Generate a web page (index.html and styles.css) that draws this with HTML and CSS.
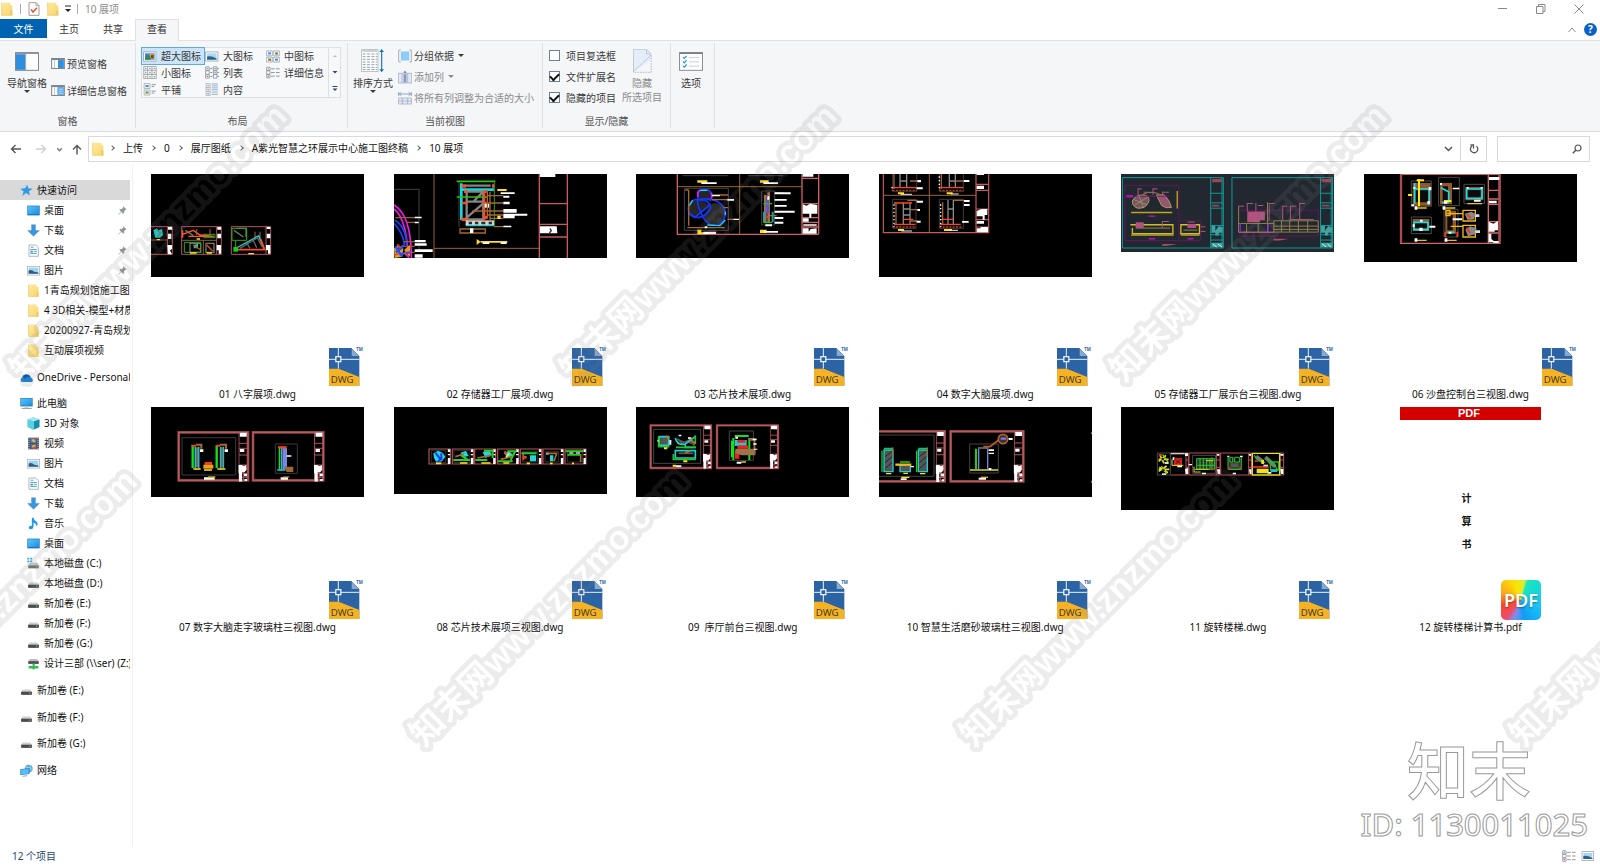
FILE: index.html
```html
<!DOCTYPE html>
<html lang="zh-CN">
<head>
<meta charset="utf-8">
<title>10 展项</title>
<link rel="stylesheet" href="styles.css">
</head>
<body>
<svg class="sprite" aria-hidden="true">
  <defs>
    <linearGradient id="g-folder" x1="0" y1="0" x2="1" y2="1"><stop offset="0" stop-color="#ffeaa0"/><stop offset="1" stop-color="#f7d56e"/></linearGradient>
    <linearGradient id="g-drive" x1="0" y1="0" x2="0" y2="1"><stop offset="0" stop-color="#e3e3e3"/><stop offset=".45" stop-color="#bcbcbc"/><stop offset=".5" stop-color="#4a4a4a"/><stop offset="1" stop-color="#3a3a3a"/></linearGradient>
    <linearGradient id="g-screen" x1="0" y1="0" x2="1" y2="1"><stop offset="0" stop-color="#58c4fb"/><stop offset="1" stop-color="#1f8fe0"/></linearGradient>
  </defs>
  <symbol id="folder" viewBox="0 0 36 42"><path d="M2 2H28V10H34V40H2Z" fill="url(#g-folder)"/><path d="M2 2V40H34" fill="none" stroke="#e9c55c" stroke-width="2"/><path d="M28 28V40H34V24Z" fill="#efc75a"/></symbol>
  <symbol id="doccheck" viewBox="0 0 36 42"><path d="M3 2H24L33 11V40H3Z" fill="#fff" stroke="#8a8a8a" stroke-width="2.5"/><path d="M24 2V11H33" fill="none" stroke="#8a8a8a" stroke-width="2"/><path d="M9 22L15 30L27 17" fill="none" stroke="#e8532a" stroke-width="4.5"/></symbol>
  <symbol id="star" viewBox="0 0 36 36"><path d="M20 2L23 12L35 13L25 20L27 32L17 25L6 33L10 21L1 13L14 12Z" fill="#2e9be8"/></symbol>
  <symbol id="desktop" viewBox="0 0 40 40"><rect x="1" y="5" width="38" height="30" fill="#1573c4"/><rect x="3" y="7" width="34" height="24" fill="url(#g-screen)"/></symbol>
  <symbol id="down" viewBox="0 0 40 40"><path d="M14 2H26V20H38L20 38L2 20H14Z" fill="#3c95e0" stroke="#2377bf" stroke-width="1"/></symbol>
  <symbol id="doc" viewBox="0 0 40 40"><path d="M6 3H27L35 11V38H6Z" fill="#f7f9fb" stroke="#8d989f" stroke-width="2"/><path d="M12 10H20M10 17H30M10 29H30M22 23H30" stroke="#56a5d6" stroke-width="3"/><path d="M11 21H18V26H11Z" fill="#3d8dc8"/></symbol>
  <symbol id="pic" viewBox="0 0 40 40"><rect x="1" y="7" width="38" height="27" fill="#fff" stroke="#9ba3a8" stroke-width="2"/><rect x="5" y="11" width="30" height="19" fill="#9fd3f3"/><path d="M5 20Q14 16 22 24L35 26V30H5Z" fill="#2c5e7e"/></symbol>
  <symbol id="pin" viewBox="0 0 28 28"><path d="M16 1L27 11L23 12L19 17L19 22L16 24L10 18L2 27L1 26L9 17L4 11L7 9H12L16 5Z" fill="#8e989f"/></symbol>
  <symbol id="cloud" viewBox="0 0 40 40"><path d="M4 33Q-1 25 7 20Q11 8 22 11Q32 12 33 20Q41 22 39 32Q38 34 33 34H8Z" fill="#1b80d2"/><path d="M7 20Q11 8 22 11Q29 12 32 20Q20 14 16 24Q11 19 7 20Z" fill="#0e5ba5"/></symbol>
  <symbol id="pc" viewBox="0 0 40 40"><rect x="1" y="3" width="38" height="26" fill="#2e7db5"/><rect x="3" y="5" width="34" height="21" fill="url(#g-screen)"/><path d="M14 29H26V33H14Z" fill="#bccbd3"/><path d="M5 35H36" stroke="#7d9aab" stroke-width="3"/></symbol>
  <symbol id="cube" viewBox="0 0 40 40"><path d="M20 1L38 8V31L20 39L2 31V8Z" fill="#36b8d0"/><path d="M20 1L38 8L22 14L2 8Z" fill="#a4e9f1"/><path d="M2 8L22 14V39L2 31Z" fill="#5ccfe0"/><path d="M22 14L38 8V31L22 38Z" fill="#178ca9"/></symbol>
  <symbol id="film" viewBox="0 0 40 40"><path d="M3 2H37V38H3Z" fill="#4d5358"/><path d="M6 4V37M34 4V37" stroke="#d9dde0" stroke-width="3" stroke-dasharray="3 3"/><path d="M11 3H29V18H11Z" fill="#3d7fd0"/><path d="M11 21H29V37H11Z" fill="#3b68b8"/><path d="M13 9L20 6L27 14L20 17ZM14 27L26 23V32H16Z" fill="#f1b437"/><path d="M21 5L29 10V4ZM18 30H28V36H18Z" fill="#d6552f"/></symbol>
  <symbol id="music" viewBox="0 0 40 40"><path d="M15 2H20Q21 11 32 17Q34 25 29 30Q30 20 20 17V30Q19 38 11 38Q4 37 6 31Q8 26 15 27Z" fill="#1d98ec"/></symbol>
  <symbol id="drive" viewBox="0 0 40 40"><path d="M9 16H31L36 23V32H4V23Z" fill="url(#g-drive)"/><path d="M4 24H36V33H4Z" fill="#4a4b4c"/><path d="M28 28H32" stroke="#6be06c" stroke-width="3"/></symbol>
  <symbol id="drivec" viewBox="0 0 40 40"><path d="M1 2H7V8H1ZM10 2H16V8H10ZM1 11H7V16H1ZM10 11H16V16H10Z" fill="#35a7ea"/><path d="M9 18H31L36 25V34H4V25Z" fill="#c8c8c8"/><path d="M4 26H36V35H4Z" fill="#707478"/><path d="M28 30H32" stroke="#6be06c" stroke-width="3"/></symbol>
  <symbol id="drivenet" viewBox="0 0 40 40"><path d="M9 6H31L36 12V21H4V12Z" fill="#bdbdbd"/><path d="M4 13H36V21H4Z" fill="#4a4b4c"/><path d="M17 21H24V28H35V35H24V38H16V35H5V28H17Z" fill="#37bd51"/></symbol>
  <symbol id="net" viewBox="0 0 40 40"><circle cx="27" cy="14" r="12" fill="#59a6d8"/><path d="M20 5Q28 13 20 24M32 3Q26 14 36 22M16 12Q27 8 38 14" fill="none" stroke="#b9e1f6" stroke-width="2"/><path d="M1 16L29 12V31L1 34Z" fill="#1c78be"/><path d="M3 18L27 14V29L3 32Z" fill="#55c0f5"/><path d="M8 38L22 36" stroke="#8aa5b5" stroke-width="3"/></symbol>

  <symbol id="navpane" viewBox="0 0 72 56"><rect x="1.5" y="1.5" width="69" height="53" fill="#fdfdfd" stroke="#7f868c" stroke-width="3"/><path d="M3 3H69" stroke="#7f868c" stroke-width="4"/><rect x="3" y="6" width="28" height="47" fill="#2f8fdf"/><path d="M32 5V53" stroke="#7f868c" stroke-width="2"/></symbol>
  <symbol id="preview" viewBox="0 0 40 32"><rect x="1.500" y="1.500" width="37" height="29" fill="#fff" stroke="#7f868c" stroke-width="3"/><path d="M2 4H38" stroke="#7f868c" stroke-width="4"/><path d="M10 5V30" stroke="#a9b0b6" stroke-width="2"/><rect x="20" y="6" width="17" height="23" fill="#2f8fdf"/></symbol>
  <symbol id="details" viewBox="0 0 40 32"><rect x="1.500" y="1.500" width="37" height="29" fill="#fff" stroke="#7f868c" stroke-width="3"/><path d="M2 4H38" stroke="#7f868c" stroke-width="4"/><path d="M10 5V30" stroke="#a9b0b6" stroke-width="2"/><rect x="18" y="6" width="19" height="23" fill="#5aa9e8"/><path d="M22 12H34M22 18H34M22 24H34" stroke="#e8f4fd" stroke-width="2"/></symbol>
  <symbol id="xl" viewBox="0 0 40 36"><rect x="2" y="5" width="35" height="26" fill="#fff" stroke="#8d959b" stroke-width="2"/><rect x="6" y="9" width="27" height="18" fill="#3f7fd3"/><path d="M6 19L15 15L22 22V27H6Z" fill="#2c8d55"/><path d="M18 11H31V24H22Z" fill="#d9a42e"/><path d="M23 14H30V22H23Z" fill="#703920"/></symbol>
  <symbol id="lg" viewBox="0 0 40 36"><rect x="2" y="5" width="35" height="26" fill="#fff" stroke="#8d959b" stroke-width="2"/><rect x="6" y="9" width="27" height="18" fill="#a6d8f5"/><path d="M6 18Q18 15 33 24V27H6Z" fill="#2c6486"/></symbol>
  <symbol id="md" viewBox="0 0 40 36"><path d="M2 2H18V16H2ZM22 2H38V16H22ZM2 20H18V34H2ZM22 20H38V34H22Z" fill="#fff" stroke="#8d959b" stroke-width="2"/><path d="M6 6H14V12H6ZM26 24H34V30H26Z" fill="#4998d8"/><path d="M26 6H34V12H26ZM6 24H14V30H6Z" fill="#58a067"/><path d="M10 25H15V31H10ZM29 9H33V13H29Z" fill="#dd5d32"/></symbol>
  <symbol id="sm" viewBox="0 0 40 40"><path d="M1 1H39V39H1ZM13 1V39M26 1V39M1 13H39M1 26H39" fill="#fff" stroke="#8d959b" stroke-width="2.500"/><path d="M5 5H9V9H5ZM18 18H22V22H18ZM31 5H35V9H31Z" fill="#4998d8"/><path d="M18 5H22V9H18ZM5 31H9V35H5ZM31 18H35V22H31Z" fill="#db7559"/><path d="M5 18H9V22H5ZM31 31H35V35H31ZM18 31H22V35H18Z" fill="#6cab78"/></symbol>
  <symbol id="list" viewBox="0 0 40 36"><path d="M2 2H12V12H2ZM2 13H12V23H2ZM2 24H12V34H2ZM24 2H34V12H24ZM24 13H34V23H24ZM24 24H34V34H24Z" fill="#fff" stroke="#8d959b" stroke-width="2.500"/><path d="M15 7H21M15 18H21M15 29H21M35 7H40M35 18H40M35 29H40" stroke="#7d858b" stroke-width="2.500"/><path d="M5 5H9V9H5ZM27 16H31V20H27Z" fill="#6aa8dc"/><path d="M5 27H9V31H5ZM27 5H31V9H27Z" fill="#db7559"/></symbol>
  <symbol id="detail" viewBox="0 0 42 36"><path d="M2 2H12V12H2ZM2 13H12V23H2ZM2 24H12V34H2Z" fill="#fff" stroke="#8d959b" stroke-width="2.500"/><path d="M15 7H42M15 18H42M15 29H42" stroke="#7d858b" stroke-width="2.500" stroke-dasharray="11 4"/><path d="M5 5H9V9H5Z" fill="#6aa8dc"/><path d="M5 27H9V31H5Z" fill="#db5a59"/></symbol>
  <symbol id="tile" viewBox="0 0 40 40"><path d="M2 2H20V17H2ZM2 22H20V37H2Z" fill="#fff" stroke="#8d959b" stroke-width="2"/><path d="M6 6H16V13H6Z" fill="#4998d8"/><path d="M6 26H16V33H6Z" fill="#58a067"/><path d="M11 26H16V30H11Z" fill="#e0aa30"/><path d="M25 5H38M25 11H33M25 25H38M25 31H33" stroke="#7d858b" stroke-width="2.500"/></symbol>
  <symbol id="content" viewBox="0 0 40 40"><path d="M2 1H14V39H2ZM2 14H14M2 26H14" fill="#fff" stroke="#8d959b" stroke-width="2"/><path d="M6 5H10V10H6ZM6 30H10V35H6Z" fill="#4998d8"/><path d="M6 18H10V22H6Z" fill="#d8683f"/><path d="M19 3H38M19 9H38M19 15H38M19 21H38M19 28H38M19 35H38" stroke="#7c9cc9" stroke-width="2.500"/></symbol>
  <symbol id="sort" viewBox="0 0 72 72"><rect x="2" y="2" width="49" height="66" fill="#fff" stroke="#a5abb0" stroke-width="2"/><path d="M4 6H49" stroke="#c4c9cc" stroke-width="5"/><path d="M5 15H49M5 23H49M5 31H49M5 39H49M5 47H49M5 55H49M5 62H49" stroke="#8ea2b2" stroke-width="3" stroke-dasharray="9 4"/><path d="M62 6V64" stroke="#1673c4" stroke-width="3.500"/><path d="M62 0L69 9H55ZM62 70L69 61H55Z" fill="#1673c4"/></symbol>
  <symbol id="group" viewBox="0 0 40 40"><path d="M8 3H2V37H8M32 3H38V37H32" fill="none" stroke="#8a939b" stroke-width="2"/><rect x="8" y="7" width="24" height="26" fill="#8dcdf7"/></symbol>
  <symbol id="addcol" viewBox="0 0 42 40"><path d="M1 9H41V38H1ZM12 9V38M29 9V38" fill="#e3eaf5" stroke="#94a3bb" stroke-width="2"/><path d="M14 8H27V38H14Z" fill="#b9c8e1"/><path d="M21 1L26 7H16Z" fill="#5e7398"/><path d="M21 12V36" stroke="#5e7398" stroke-width="3"/></symbol>
  <symbol id="fit" viewBox="0 0 42 40"><path d="M1 20H41V38H1ZM1 29H41M13 20V38M29 20V38" fill="#e3eaf5" stroke="#94a3bb" stroke-width="2"/><path d="M2 2V14M40 2V14M4 8H38M10 3L4 8L10 13M32 3L38 8L32 13" fill="none" stroke="#8293b5" stroke-width="2.500"/></symbol>
  <symbol id="hide" viewBox="0 0 56 72"><path d="M1 1H40L54 15V33L1 68Z" fill="#e5edf8"/><path d="M1 70V1H40L54 15M40 1V15H54M1 68L54 18" fill="none" stroke="#a9b8cf" stroke-width="2"/><path d="M54 18V70H1" fill="none" stroke="#8da0c0" stroke-width="2" stroke-dasharray="5 3"/></symbol>
  <symbol id="options" viewBox="0 0 72 56"><rect x="1.500" y="1.500" width="69" height="53" fill="#fcfcfc" stroke="#8a9097" stroke-width="3"/><path d="M2 3H70" stroke="#767d84" stroke-width="5"/><path d="M12 15L16 19L23 11M12 28L16 32L23 24M12 41L16 45L23 37" fill="none" stroke="#2e8fe0" stroke-width="3.500"/><path d="M30 16H60M30 29H60M30 42H60" stroke="#c4c8cc" stroke-width="2.500"/></symbol>

  <symbol id="dwg" viewBox="0 0 120 120">
    <path d="M15 3H82L106 27V117H15Z" fill="#2b63a4"/><path d="M83 2L107 26V2Z" fill="#fff"/><path d="M83 5V27H105Z" fill="#86a9d0"/>
    <path d="M15 65H44L106 90V117H15Z" fill="#f5b324"/><path d="M43 3V65M15 37H106" stroke="#e9f1f8" stroke-width="3"/><rect x="35.500" y="29" width="15" height="15" fill="#2b63a4" stroke="#fff" stroke-width="3.500"/>
    <text x="20" y="109" class="dwg-name">DWG</text><text x="97" y="13" class="dwg-tm">TM</text>
  </symbol>
  <symbol id="titleblock" viewBox="0 0 30 150" preserveAspectRatio="none"><path d="M2 0V150M2 35H28M2 50H28M2 70H28M2 100H28M16 100V150M2 112H28M2 125H28M2 137H28" stroke="#b75358" stroke-width="3" fill="none"/><path d="M5 3H27V15H5ZM5 52H19V61H5ZM0 100H12L16 104L26 100V115L20 122H12V150H2V125H0ZM18 126H28V134H18ZM20 142H28V148H20Z" fill="#fff"/></symbol>
</svg>

<div class="window">
  <header class="titlebar">
    <svg class="i-folder"><use href="#folder"/></svg><span class="tick"></span>
    <button class="bare" aria-label="属性"><svg class="i-folder"><use href="#doccheck"/></svg></button>
    <button class="bare" aria-label="新建文件夹"><svg class="i-folder"><use href="#folder"/></svg></button>
    <button class="bare customize" aria-label="自定义快速访问工具栏"><svg class="i-cust" viewBox="0 0 8 8"><path d="M1 1H7" stroke="#222"/><path d="M1 4H7L4 7Z" fill="#222"/></svg></button>
    <span class="tick"></span>
    <h1 class="caption">10 展项</h1>
    <div class="winbtns">
      <button class="bare" aria-label="最小化"><svg viewBox="0 0 10 10"><path d="M0 4.500H9" stroke="#888"/></svg></button>
      <button class="bare" aria-label="还原"><svg viewBox="0 0 10 10"><path d="M.5 2.500H7V9.500H.5ZM2.500 2.500V.5H9V7.500H7" fill="none" stroke="#888"/></svg></button>
      <button class="bare" aria-label="关闭"><svg viewBox="0 0 10 10"><path d="M.5 .5L9.500 9.500M9.500 .5L.5 9.500" stroke="#888"/></svg></button>
    </div>
  </header>

  <nav class="tabs">
    <button class="tab tab-file">文件</button><button class="tab">主页</button><button class="tab">共享</button><button class="tab tab-on">查看</button>
    <div class="tabs-end">
      <button class="bare" aria-label="最小化功能区"><svg class="i-up" viewBox="0 0 8 6"><path d="M.5 5L4 1L7.500 5" fill="none" stroke="#8a8a8a"/></svg></button>
      <button class="help" aria-label="帮助">?</button>
    </div>
  </nav>

  <section class="ribbon">
    <div class="group g-pane">
      <div class="group-body">
        <button class="big"><span class="big-icon"><svg class="i-wide"><use href="#navpane"/></svg></span>导航窗格<i class="caret"></i></button>
        <div class="stack stack-two">
          <button class="small"><svg class="i-pane"><use href="#preview"/></svg>预览窗格</button>
          <button class="small"><svg class="i-pane"><use href="#details"/></svg>详细信息窗格</button>
        </div>
      </div>
      <div class="group-name">窗格</div>
    </div>
    <div class="group g-layout">
      <div class="group-body">
        <div class="gallery">
          <div class="views">
            <button class="view view-on"><svg><use href="#xl"/></svg>超大图标</button>
            <button class="view"><svg><use href="#lg"/></svg>大图标</button>
            <button class="view"><svg><use href="#md"/></svg>中图标</button>
            <button class="view"><svg><use href="#sm"/></svg>小图标</button>
            <button class="view"><svg><use href="#list"/></svg>列表</button>
            <button class="view"><svg><use href="#detail"/></svg>详细信息</button>
            <button class="view"><svg><use href="#tile"/></svg>平铺</button>
            <button class="view"><svg><use href="#content"/></svg>内容</button>
          </div>
          <div class="scroller">
            <button class="bare" aria-label="上一行"><svg viewBox="0 0 6 6"><path d="M1 4H5L3 2Z" fill="#b5b9bd"/></svg></button>
            <button class="bare" aria-label="下一行"><svg viewBox="0 0 6 6"><path d="M.5 2H5.500L3 4.500Z" fill="#344766"/></svg></button>
            <button class="bare" aria-label="其他"><svg viewBox="0 0 6 6"><path d="M.5 .5H5.500" stroke="#344766"/><path d="M.5 2.500H5.500L3 5Z" fill="#344766"/></svg></button>
          </div>
        </div>
      </div>
      <div class="group-name">布局</div>
    </div>
    <div class="group g-current">
      <div class="group-body">
        <button class="big"><span class="big-icon"><svg class="i-square"><use href="#sort"/></svg></span>排序方式<i class="caret"></i></button>
        <div class="stack">
          <button class="small"><svg class="i-cmd"><use href="#group"/></svg>分组依据<i class="caret"></i></button>
          <button class="small" disabled><svg class="i-cmd"><use href="#addcol"/></svg>添加列<i class="caret"></i></button>
          <button class="small" disabled><svg class="i-cmd"><use href="#fit"/></svg>将所有列调整为合适的大小</button>
        </div>
      </div>
      <div class="group-name">当前视图</div>
    </div>
    <div class="group g-show">
      <div class="group-body">
        <div class="stack">
          <label class="check"><input type="checkbox">项目复选框</label>
          <label class="check"><input type="checkbox" checked>文件扩展名</label>
          <label class="check"><input type="checkbox" checked>隐藏的项目</label>
        </div>
        <button class="big" disabled><span class="big-icon"><svg class="i-page"><use href="#hide"/></svg></span>隐藏<span>所选项目</span></button>
      </div>
      <div class="group-name">显示/隐藏</div>
    </div>
    <div class="group g-options">
      <div class="group-body">
        <button class="big"><span class="big-icon"><svg class="i-wide"><use href="#options"/></svg></span>选项</button>
      </div>
    </div>
  </section>

  <div class="address">
    <button class="bare nav-b" aria-label="后退"><svg viewBox="0 0 12 10"><path d="M11 5H1.500M5.500 1L1.500 5L5.500 9" fill="none" stroke="#555" stroke-width="1.400"/></svg></button>
    <button class="bare nav-b" aria-label="前进" disabled><svg viewBox="0 0 12 10"><path d="M1 5H10.500M6.500 1L10.500 5L6.500 9" fill="none" stroke="#cfcfcf" stroke-width="1.400"/></svg></button>
    <button class="bare nav-s" aria-label="最近的位置"><svg viewBox="0 0 6 6"><path d="M1 2L3 4L5 2" fill="none" stroke="#777" stroke-width="1.200"/></svg></button>
    <button class="bare nav-u" aria-label="上移"><svg viewBox="0 0 10 11"><path d="M5 10.500V1.500M1 5.500L5 1.500L9 5.500" fill="none" stroke="#555" stroke-width="1.400"/></svg></button>
    <div class="pathbox">
      <svg class="i-folder"><use href="#folder"/></svg>
      <nav class="crumbs">
        <i class="chev"></i><a href="#">上传</a><i class="chev"></i><a href="#">0</a><i class="chev"></i><a href="#">展厅图纸</a><i class="chev"></i><a href="#">A紫光智慧之环展示中心施工图终稿</a><i class="chev"></i><a href="#">10 展项</a>
      </nav>
      <button class="bare path-drop" aria-label="以前的位置"><svg viewBox="0 0 9 6"><path d="M1 1L4.500 4.500L8 1" fill="none" stroke="#555" stroke-width="1.500"/></svg></button>
      <button class="bare path-refresh" aria-label="刷新"><svg viewBox="0 0 10 10"><path d="M7.500 2.200A3.700 3.700 0 1 1 3 2" fill="none" stroke="#555" stroke-width="1.300"/><path d="M1.500 1H4.500V4.500" fill="none" stroke="#555" stroke-width="1.300"/></svg></button>
    </div>
    <div class="searchbox">
      <input type="search" aria-label="搜索">
      <svg viewBox="0 0 10 10"><circle cx="6" cy="4" r="3" fill="none" stroke="#555" stroke-width="1.200"/><path d="M4 6L.8 9.200" stroke="#555" stroke-width="1.500"/></svg>
    </div>
  </div>

  <div class="main">
    <nav class="tree">
      <a href="#" class="root here"><svg><use href="#star"/></svg><span>快速访问</span></a>
      <a href="#"><svg><use href="#desktop"/></svg><span>桌面</span><svg class="i-pin"><use href="#pin"/></svg></a>
      <a href="#"><svg><use href="#down"/></svg><span>下载</span><svg class="i-pin"><use href="#pin"/></svg></a>
      <a href="#"><svg><use href="#doc"/></svg><span>文档</span><svg class="i-pin"><use href="#pin"/></svg></a>
      <a href="#"><svg><use href="#pic"/></svg><span>图片</span><svg class="i-pin"><use href="#pin"/></svg></a>
      <a href="#"><svg><use href="#folder"/></svg><span>1青岛规划馆施工图</span></a>
      <a href="#"><svg><use href="#folder"/></svg><span>4 3D相关-模型+材质</span></a>
      <a href="#"><svg><use href="#folder"/></svg><span>20200927-青岛规划</span></a>
      <a href="#"><svg><use href="#folder"/></svg><span>互动展项视频</span></a>
      <a href="#" class="root"><svg><use href="#cloud"/></svg><span>OneDrive - Personal</span></a>
      <a href="#" class="root tight"><svg><use href="#pc"/></svg><span>此电脑</span></a>
      <a href="#"><svg><use href="#cube"/></svg><span>3D 对象</span></a>
      <a href="#"><svg><use href="#film"/></svg><span>视频</span></a>
      <a href="#"><svg><use href="#pic"/></svg><span>图片</span></a>
      <a href="#"><svg><use href="#doc"/></svg><span>文档</span></a>
      <a href="#"><svg><use href="#down"/></svg><span>下载</span></a>
      <a href="#"><svg><use href="#music"/></svg><span>音乐</span></a>
      <a href="#"><svg><use href="#desktop"/></svg><span>桌面</span></a>
      <a href="#"><svg><use href="#drivec"/></svg><span>本地磁盘 (C:)</span></a>
      <a href="#"><svg><use href="#drive"/></svg><span>本地磁盘 (D:)</span></a>
      <a href="#"><svg><use href="#drive"/></svg><span>新加卷 (E:)</span></a>
      <a href="#"><svg><use href="#drive"/></svg><span>新加卷 (F:)</span></a>
      <a href="#"><svg><use href="#drive"/></svg><span>新加卷 (G:)</span></a>
      <a href="#"><svg><use href="#drivenet"/></svg><span>设计三部 (\\ser) (Z:)</span></a>
      <a href="#" class="root"><svg><use href="#drive"/></svg><span>新加卷 (E:)</span></a>
      <a href="#" class="root"><svg><use href="#drive"/></svg><span>新加卷 (F:)</span></a>
      <a href="#" class="root tight"><svg><use href="#drive"/></svg><span>新加卷 (G:)</span></a>
      <a href="#" class="root"><svg><use href="#net"/></svg><span>网络</span></a>
    </nav>

    <main class="files">
      <figure class="file">
        <div class="thumb">
          <svg class="cad h103" viewBox="33 27 639 309">
            <g fill="none" stroke="#b75358" stroke-width="3"><path d="M33 185H97V268H33M82 185V268M125 185H244V268H125ZM230 185V268M274 185H392V268H274ZM378 185V268"/></g>
            <path d="M33 225H82M125 226H230M190 226V268" stroke="#8e5b33" stroke-width="3"/>
            <path d="M84 186H96V194H84ZM84 206H94V222H84ZM82 240H96V252L90 256L96 268H84ZM232 186H243V194H232ZM232 206H243V220H232ZM230 240H243V266H236V256H230ZM380 186H391V192H380ZM380 206H391V220H380ZM378 240H391V266H384V256H378Z" fill="#fff"/>
            <path d="M40 196L50 190L56 196L66 192L69 210L60 218H46ZM160 240L174 236V250H162Z" fill="#19c6c9"/>
            <path d="M48 192L62 205L52 215M136 196L160 212M150 235H182V262H150ZM198 235H222V262H198ZM282 196L310 216M290 190H318V216" stroke="#6f7d60" stroke-width="4" fill="none"/>
            <path d="M128 208L160 196L180 210L222 214M128 196V218M145 214H205" stroke="#ff5130" stroke-width="4" fill="none"/><path d="M188 208H225V218H190M133 232H182V262H133ZM276 190H320V226H276ZM287 226V250" stroke="#1fae1f" stroke-width="3" fill="none"/>
            <path d="M210 192V216M170 192V210M345 200V225M360 200V225" stroke="#a56937" stroke-width="3"/>
            <path d="M284 252L356 212L372 252" fill="none" stroke="#1fd4d4" stroke-width="4"/><path d="M284 254H374L362 222" fill="none" stroke="#ff4a2a" stroke-width="5"/><path d="M300 250L352 218L366 245M320 234L330 250M340 226L350 248" stroke="#666" stroke-width="4" fill="none"/>
            <path d="M280 246H294V260H280Z" fill="#17d117"/><path d="M160 240L182 255M200 240L218 258" stroke="#e4472a" stroke-width="4"/><path d="M150 264H170M200 264H216M325 266H342M170 222H180M50 224H60" stroke="#ffe11e" stroke-width="4"/>
          </svg>
          <svg class="badge"><use href="#dwg"/></svg>
        </div>
        <figcaption>01 八字展项.dwg</figcaption>
      </figure>

      <figure class="file">
        <div class="thumb">
          <svg class="cad h84" viewBox="760 27 639 252">
            <path d="M760 73H835V262M955 50V186" stroke="#444" stroke-width="3" fill="none"/><path d="M880 27V279M880 250H1195" stroke="#9a6130" stroke-width="3"/>
            <path d="M1196 27V279M1280 27V279M1196 116H1280M1196 178H1280M1196 216H1280" stroke="#c8595d" stroke-width="4"/>
            <path d="M760 120Q812 150 812 279M760 132Q798 160 803 279" fill="none" stroke="#f218ec" stroke-width="5"/><path d="M762 165Q796 185 798 240M760 175Q785 200 792 240" fill="none" stroke="#1a43f5" stroke-width="5"/>
            <path d="M764 158H822M798 172H822M790 230H822M780 244H822M800 262H822" stroke="#9a6130" stroke-width="4"/>
            <path d="M822 155H843V160H822ZM822 170H834V175H822ZM822 225H855V232H822ZM822 235H858V242H822ZM822 253H876V261H822ZM822 268H846V278H822Z" fill="#fff"/>
            <path d="M760 250L775 240L770 262L788 248L785 275L762 279ZM790 255L808 240V275Z" fill="#d8a21c"/><path d="M766 262L790 240M764 244L784 274M776 268L808 262" stroke="#274bff" stroke-width="7"/><path d="M770 238L780 250M792 262L800 274M762 270L774 266" stroke="#ff3b30" stroke-width="5"/>
            <path d="M962 55V165M960 74H1060M975 180H1060" stroke="#16d6dc" stroke-width="8"/>
            <path d="M974 62H1050M978 80V165M978 80H1030M1028 80V165M978 110H1030M978 158L1028 115M1000 108L1028 80M978 163H1028" stroke="#858585" stroke-width="7" fill="none"/>
            <path d="M948 49H1064M948 96H1042" stroke="#27c315" stroke-width="5"/><path d="M1061 46V185" stroke="#27a315" stroke-width="3"/>
            <path d="M964 58H976V68H964ZM1054 58H1060V68H1054ZM970 76H980V84H970ZM1028 76H1038V84H1028ZM964 110H980V118H964ZM1028 110H1038V118H1028ZM962 158H980V168H962ZM1028 80H1034V165H1028ZM1028 152H1040V162H1028Z" fill="#ff4a1c"/>
            <path d="M975 166H1060V180H975Z" fill="#d7d0c9"/><path d="M984 170H994V178H984ZM1003 170H1013V178H1003ZM1022 170H1034V178H1022ZM1044 170H1054V178H1044Z" fill="#2e2e2e"/><path d="M1032 116H1046V128H1032Z" fill="#fff"/>
            <path d="M1040 76V160M1048 80V165M1040 92H1088M1040 114H1088M995 138H1088M1040 150H1088M1048 160H1088M1060 185H1088M958 192H1034V204H958Z" stroke="#a96732" stroke-width="4" fill="none"/>
            <path d="M1080 82H1122V87H1080ZM1088 92H1106V98H1088ZM1088 110H1107V118H1088ZM1088 132H1128V143H1088ZM1088 146H1160V152H1088ZM1088 152H1122V160H1088ZM1088 182H1112V187H1088ZM988 190H998V204H988Z" fill="#fff"/>
            <path d="M1008 222L1020 230L1008 240ZM1020 228H1100V233H1020ZM1070 72H1098V78H1070ZM1070 152H1080V162H1070Z" fill="#ffe01c"/><path d="M1026 232H1046V237H1026ZM1080 232H1098V237H1080Z" fill="#fff"/>
            <path d="M1198 27H1244V36H1198ZM1198 184H1248L1250 205H1198Z" fill="#fff"/><path d="M1228 190L1232 197L1226 204" stroke="#333" stroke-width="4" fill="none"/>
          </svg>
          <svg class="badge"><use href="#dwg"/></svg>
        </div>
        <figcaption>02 存储器工厂展项.dwg</figcaption>
      </figure>

      <figure class="file">
        <div class="thumb">
          <svg class="cad h84" viewBox="48 27 639 252">
            <path d="M172 27V208H596M546 27V208M596 27V208M546 40H596M546 116H596M546 158H596M546 172H596M546 186H596" fill="none" stroke="#d06065" stroke-width="4"/><path d="M172 65H546M359 27V208" stroke="#9a6130" stroke-width="3"/>
            <path d="M188 32H325M384 32H490M193 70H325V196H193ZM425 78H464V180H425Z" fill="none" stroke="#444" stroke-width="3"/>
            <path d="M548 27H580V35H548ZM548 118L560 122L570 116L592 120V146H574V158H568V146H548ZM548 160H566V170H548ZM550 178H590V182H550ZM548 190H566V200L572 192L590 190V206H548Z" fill="#fff"/>
            <path d="M240 104Q218 98 206 122Q200 150 225 157L270 120" fill="#252525" stroke="#1c37ff" stroke-width="5"/><path d="M236 104Q228 78 246 74Q272 68 276 92Q272 106 270 108" fill="#252525" stroke="#1c37ff" stroke-width="5"/><path d="M234 96Q230 80 240 76M274 84Q278 96 272 104" fill="none" stroke="#d61bff" stroke-width="5"/>
            <path d="M270 118Q300 108 314 132Q322 160 292 178Q262 182 250 156Z" fill="#2b2b2b"/><path d="M232 104Q290 94 312 128Q324 160 296 180Q262 188 246 150Q232 122 232 104M236 104Q270 104 272 128Q262 152 236 158Q212 156 206 140" fill="none" stroke="#1236ff" stroke-width="5"/><path d="M218 106L208 122M262 180L300 182L316 165M316 140V150M240 76H262" stroke="#19d9f2" stroke-width="4" fill="none"/>
            <path d="M206 75V182M206 75H196M202 188H314M276 104H342M310 128H325M322 163H340M276 90H325" stroke="#a96732" stroke-width="4"/><path d="M276 90H300V94H276ZM322 102H342V107H322ZM340 161H357V165H340ZM254 184H262V190H254Z" fill="#fff"/>
            <path d="M436 90V175M446 82V175" stroke="#ab6d46" stroke-width="8"/><path d="M442 100V145" stroke="#5b57cf" stroke-width="10"/><path d="M432 140V172M458 140V172" stroke="#0ba9a8" stroke-width="6"/><path d="M430 116H456M430 172H456" stroke="#1ec31e" stroke-width="4"/>
            <path d="M464 84H490M464 104H475M464 122H470M464 140H480M450 152H470" stroke="#a96732" stroke-width="4"/><path d="M464 82H512V88H464ZM464 102H500V107H464ZM464 120H500V125H464ZM464 137H524V143H464ZM464 156H490V162H464ZM464 170H490V176H464ZM436 178H456V184H436ZM442 94H448V104H442Z" fill="#fff"/>
            <path d="M436 156H448" stroke="#f83838" stroke-width="5"/>
            <path d="M232 46H262V53H232ZM420 46H446V53H420ZM232 194H244V202H262V208H232ZM420 194H440V204H420Z" fill="#ffe01c"/><path d="M244 52H290V57H244ZM430 52H474V57H430ZM250 200H288V207H250ZM432 198H474V203H432Z" fill="#fff"/>
          </svg>
          <svg class="badge"><use href="#dwg"/></svg>
        </div>
        <figcaption>03 芯片技术展项.dwg</figcaption>
      </figure>

      <figure class="file">
        <div class="thumb">
          <svg class="cad h103" viewBox="775 27 639 309">
            <path d="M788 27V203H1104V27M1066 27V203M1066 58H1104M1066 76H1104M1066 132H1104M1066 164H1104M1066 186H1104" fill="none" stroke="#c8595d" stroke-width="3.500"/><path d="M788 91H1066M926 27V203" stroke="#9a6130" stroke-width="3"/>
            <path d="M1068 27H1090V30H1068ZM1068 62H1090V72H1068ZM1068 138L1082 132H1100V150H1092V164H1086V154H1068ZM1068 168H1090V176H1068ZM1068 190H1080V186H1102V202H1068Z" fill="#fff"/>
            <path d="M816 27V80H888V27M956 27V80H1028V27M816 103H886V190H816ZM956 103H1028V190H956Z" fill="none" stroke="#3b3b3b" stroke-width="3"/>
            <path d="M838 27V68M858 27V68M986 27V68M1004 27V68M848 112V178M868 112V178M982 105V178M998 105V178M848 132H868M848 150H868M982 132H998M838 48H858M986 48H1004" stroke="#8a8a8a" stroke-width="4"/>
            <path d="M820 27V72M826 112V178M962 27V72M966 112V178" stroke="#9d6238" stroke-width="4"/>
            <path d="M815 68H888M955 68H1028M820 114H874M846 163H878M820 178H884M962 163H1000M958 178H1020" stroke="#ff4220" stroke-width="4"/><path d="M816 76H888M956 76H1028M816 186H886M956 186H1024" stroke="#bd3c20" stroke-width="4" stroke-dasharray="6 4"/>
            <path d="M814 66V78M820 118V186M960 118V186M956 34V70" stroke="#fff" stroke-width="4" stroke-dasharray="4 7"/><path d="M860 106H890M868 134H890M870 168H890M1000 106H1030M1004 48H1030M868 48H890M888 70H906" stroke="#a96732" stroke-width="4"/>
            <path d="M890 45H901V52H890ZM888 67H906V73H888ZM888 107H907V113H888ZM890 132H898V138H890ZM888 167H900V173H888ZM1030 105H1047V111H1030ZM1030 117H1047V123H1030ZM1030 45H1046V51H1030ZM1024 168H1044V173H1024Z" fill="#fff"/>
            <path d="M832 85H850M978 85H996M832 195H850M970 195H994" stroke="#ffe01c" stroke-width="6"/><path d="M840 88H874M990 87H1014M842 198H874M984 196H1012" stroke="#eee" stroke-width="3"/>
          </svg>
          <svg class="badge"><use href="#dwg"/></svg>
        </div>
        <figcaption>04 数字大脑展项.dwg</figcaption>
      </figure>

      <figure class="file">
        <div class="thumb">
          <svg class="cad cad-slate h78" viewBox="63 27 639 235">
            <path d="M66 38H370V250H66ZM332 38V250M366 38V250M332 85H370M332 114H370M332 130H370M332 182H370M332 210H370M332 226H370M396 38H699V250H396ZM663 38V250M695 38V250M663 85H699M663 114H699M663 130H699M663 182H699M663 210H699M663 226H699" fill="none" stroke="#119a99" stroke-width="3"/>
            <path d="M73 62H236V228H73ZM236 168H302V228H236M414 136H656V214H414" fill="none" stroke="#6a1466" stroke-width="2.500"/>
            <path d="M336 42H366V52H336ZM336 120H358V125H336ZM666 42H697V52H666ZM666 120H690V125H666Z" fill="#9c4556"/><path d="M334 184L346 182V198L356 184L368 188V204H356V212H346V204H334ZM334 234H368V248H334ZM664 184L676 182V198L686 184L698 188V204H686V212H676V204H664ZM664 234H698V248H664Z" fill="#3fa39f"/><path d="M338 238L350 247M354 238L366 247M668 238L680 247M684 238L694 247" stroke="#e6e6e6" stroke-width="3"/>
            <path d="M96 108Q104 90 128 90Q148 92 146 108Q138 132 112 130Q94 124 96 108Z" fill="#7a5464" stroke="#a9a05c" stroke-width="3"/><path d="M168 90L192 90Q210 108 214 128Q196 132 184 122Z" fill="#965672" stroke="#a9985c" stroke-width="3"/><path d="M128 88Q156 74 186 92" fill="none" stroke="#8a8450" stroke-width="3"/>
            <path d="M78 94H98" stroke="#a518a8" stroke-width="8"/><path d="M98 94H206" stroke="#76157a" stroke-width="3"/><path d="M113 70V96M158 70V90M187 80V92M113 72H124M158 72H172M187 82H206M130 82H146" stroke="#b0567e" stroke-width="3"/><path d="M100 104L140 120M104 120L140 98M116 92L130 130" stroke="#a0a46a" stroke-width="2"/>
            <path d="M92 143H216M231 78V131M92 211H220M242 211H298" stroke="#c3a41c" stroke-width="4"/><path d="M145 154H165M145 222H165M262 222H280" stroke="#ae18b4" stroke-width="4"/>
            <path d="M90 180H218V207H96V190M242 180H298V207H242Z" fill="none" stroke="#d6bb26" stroke-width="4"/><path d="M106 190H210M250 196H292" stroke="#8c8542" stroke-width="3"/><path d="M106 172H130V190H106ZM262 178H288V190H262Z" fill="#b2527f"/><path d="M186 170H206M186 170V190M262 172H284M302 186H316M302 200H316" stroke="#b0567e" stroke-width="3"/>
            <path d="M188 238H232L200 243H184Z" fill="#b04c68"/><path d="M522 222H568L540 227H520Z" fill="#b04c68"/>
            <path d="M416 125V202H656V168H522M416 176H522M440 176V202M475 176V202M503 112V202M522 168V202M545 168V202M570 168V202M596 168V202M624 168V202M522 184H656M522 194H656" fill="none" stroke="#948049" stroke-width="3"/><path d="M421 176V202M505 176V202" stroke="#831fea" stroke-width="4"/>
            <path d="M442 140H495V166H480V172H442Z" fill="#b2527f"/><path d="M442 114V140M468 114V140M508 114V168M549 122V166M572 122V166M600 114V166M442 116H460M474 122H490M508 116H524M414 124H432M549 124H562M574 124H590M600 116H616M570 164H642M416 203H524" stroke="#b0567e" stroke-width="3"/>
          </svg>
          <svg class="badge"><use href="#dwg"/></svg>
        </div>
        <figcaption>05 存储器工厂展示台三视图.dwg</figcaption>
      </figure>

      <figure class="file">
        <div class="thumb">
          <svg class="cad h88" viewBox="790 27 639 264">
            <path d="M900 28H1198V235H900ZM1163 28V235M1163 76H1198M1163 102H1198M1163 118H1198M1163 170H1198M1163 204H1198" fill="none" stroke="#d6686b" stroke-width="4"/><path d="M901 28V235M1196 28V235" stroke="#a84c50" stroke-width="7"/>
            <path d="M1165 36H1196V45H1165ZM1165 107H1188V115H1165ZM1164 170L1178 176L1192 168V196H1182V200H1164ZM1164 206H1172V222L1184 232H1164ZM1178 228H1194V234H1178Z" fill="#fff"/>
            <path d="M932 48H992V124H932ZM1014 37H1076V122H1014ZM1090 58H1151V116H1090ZM932 156H992V206H932ZM1030 134H1072V216H1030Z" fill="none" stroke="#4a4a4a" stroke-width="3"/>
            <path d="M936 54H990V122H936ZM1018 54H1054V118H1018ZM1094 66H1148V106H1094ZM936 162H986V198H936ZM1034 138H1066V206H1034Z" fill="#8f592b"/><path d="M944 76H982V112H944ZM1026 64H1042V110H1026ZM1100 74H1140V98H1100ZM942 174H980V190H942ZM1040 150H1056V196H1040Z" fill="#0c0c0c"/>
            <path d="M942 54V116M940 72H986V118M1020 68L1044 80V112H1024M1098 72H1144V100H1098ZM940 172H982V194H940ZM1040 202H1062" fill="none" stroke="#16dce3" stroke-width="5"/>
            <path d="M955 42V124M948 46H970M922 90H934M1030 108H1052" stroke="#ffe31b" stroke-width="6"/>
            <path d="M938 66H944V72H938ZM984 66H992V76H984ZM932 118H940V124H932ZM980 108H988V118H980ZM1018 54H1024V60H1018ZM1030 108H1040V116H1030ZM1098 66H1104V71H1098ZM1140 66H1146V71H1140ZM1120 104H1140V110H1120ZM936 178H942V186H936ZM958 164H966V170H958ZM986 182H1004V188H986ZM1056 68H1076V73H1056ZM956 188H966V198H956ZM1056 160H1084V166H1056ZM1044 200H1052V206H1044Z" fill="#fff"/>
            <path d="M1087 136H1124V168H1087ZM1087 181H1124V216H1087ZM1040 146H1087M1050 184H1087M1036 136H1048V152H1036Z" fill="none" stroke="#f6b719" stroke-width="4"/><path d="M1092 146L1112 140L1126 148L1118 164H1100ZM1094 194L1108 184L1128 190L1124 208L1102 214Z" fill="#898989"/><path d="M1098 148L1110 158M1098 188L1108 204M1034 200V216M1070 200V216" stroke="#ee3b22" stroke-width="6"/><path d="M1124 148H1136V156H1124ZM1124 196H1138V204H1124Z" fill="#ddd"/>
            <path d="M942 129H978M1026 129H1064M1100 116H1144M942 226H978M1032 226H1068" stroke="#e8c21a" stroke-width="4"/><path d="M942 124H950V134H942ZM1026 124H1034V134H1026ZM942 220H950V230H942ZM1032 220H1040V230H1032Z" fill="#fff"/>
          </svg>
          <svg class="badge"><use href="#dwg"/></svg>
        </div>
        <figcaption>06 沙盘控制台三视图.dwg</figcaption>
      </figure>

      <figure class="file">
        <div class="thumb">
          <svg class="cad h90" viewBox="33 19 639 270">
            <path d="M116 95H324V239H116ZM339 95H550V239H339Z" fill="none" stroke="#8f4246" stroke-width="8"/><path d="M116 95H324V239H116ZM339 95H550V239H339Z" fill="none" stroke="#d97175" stroke-width="2"/>
            <use href="#titleblock" x="295" y="93" width="28" height="150"/><use href="#titleblock" x="522" y="93" width="28" height="150"/>
            <path d="M126 111H287V223H126ZM406 130H472V218H406Z" fill="none" stroke="#3a3a3a" stroke-width="3"/>
            <path d="M158 134V202M230 134V202" stroke="#18e018" stroke-width="7"/><path d="M166 138V202M176 138V202M242 138V202M250 138V202" stroke="#2bb8bc" stroke-width="5"/><path d="M171 140V200M246 140V200" stroke="#6d6d6d" stroke-width="6"/>
            <path d="M168 132H184V144M240 132H258V144" fill="none" stroke="#a96732" stroke-width="6"/><path d="M154 132H168V138H154ZM228 132H240V138H228ZM194 184H216V192H194Z" fill="#f5401c"/><path d="M190 192H220V204H190Z" fill="#f09b1c"/><path d="M160 205H182M232 205H256M192 208H216" stroke="#ffe81c" stroke-width="4"/><path d="M180 146H190V154H180ZM254 146H264V154H254ZM192 230H224V237H192Z" fill="#fff"/><path d="M204 229H226" stroke="#dfbb16" stroke-width="4"/>
            <path d="M418 142V205" stroke="#18e018" stroke-width="4"/><path d="M424 142V205" stroke="#2bb8bc" stroke-width="4"/><path d="M434 142V205" stroke="#7289e0" stroke-width="14"/><path d="M414 140H440" stroke="#f5401c" stroke-width="7"/><path d="M432 198H460V214H440Z" fill="#99673a"/><path d="M412 208H436" stroke="#17cfd3" stroke-width="5"/><path d="M440 164H454V168H440ZM422 230H444V237H422Z" fill="#fff"/><path d="M430 229H448" stroke="#dfbb16" stroke-width="3"/>
          </svg>
          <svg class="badge"><use href="#dwg"/></svg>
        </div>
        <figcaption>07 数字大脑走字玻璃柱三视图.dwg</figcaption>
      </figure>

      <figure class="file">
        <div class="thumb">
          <svg class="cad h87" viewBox="760 19 639 261">
            <path d="M865 145H929V190H865ZM935 145H998V190H935ZM1002 145H1065V190H1002ZM1071 145H1134V190H1071ZM1139 145H1203V190H1139ZM1207 145H1268V190H1207ZM1273 145H1336V190H1273Z" fill="none" stroke="#b75358" stroke-width="3.500"/>
            <path d="M925 146V190M994 146V190M1061 146V190M1130 146V190M1198 146V190M1264 146V190M1332 146V190" stroke="#fff" stroke-width="7" stroke-dasharray="8 6 4 8 14 0"/>
            <path d="M872 150H915V186H872ZM940 150H988V186H940ZM1146 152H1190V184H1146ZM1213 152H1254V184H1213ZM1280 150H1326V184H1280Z" fill="none" stroke="#484848" stroke-width="2"/>
            <path d="M878 158L892 150L906 156L914 168L904 182L888 186L880 172ZM960 156L976 150L984 166L966 170ZM1026 154L1046 148L1054 164L1034 172ZM1092 160L1104 150L1118 164L1102 172ZM1168 164H1186V182H1168ZM1228 164H1238V182H1228Z" fill="#1fd7dd"/>
            <path d="M884 156L900 176L888 186M902 158V178" stroke="#1837ef" stroke-width="6" fill="none"/><path d="M938 178H988M958 162L980 176M1004 178H1040M1030 150H1056V172M1072 182H1116M1100 152H1124L1110 178M1142 158H1188M1274 152H1328M1280 162H1318" stroke="#27cc27" stroke-width="6" fill="none"/>
            <path d="M944 168L970 160M1010 172L1050 164M1080 176L1114 168M1216 158H1248L1240 182M1320 160V184M1148 160V178" stroke="#a96732" stroke-width="5" fill="none"/><path d="M1146 166H1158V174H1146ZM1090 152H1098V160H1090Z" fill="#f33c24"/><path d="M886 188H902M958 187H980M1022 187H1050M1088 187H1106M1158 188H1168M1228 188H1236M1294 188H1300M1096 170L1106 158" stroke="#ffe81c" stroke-width="5"/><path d="M1286 154H1298V160H1286ZM1306 154H1318V160H1306ZM1216 156H1224V162H1216Z" fill="#9fa1a8"/>
          </svg>
          <svg class="badge"><use href="#dwg"/></svg>
        </div>
        <figcaption>08 芯片技术展项三视图.dwg</figcaption>
      </figure>

      <figure class="file">
        <div class="thumb">
          <svg class="cad h90" viewBox="48 19 639 270">
            <path d="M92 74H273V202H92ZM291 74H474V202H291Z" fill="none" stroke="#8f4246" stroke-width="7"/><path d="M92 74H273V202H92ZM291 74H474V202H291Z" fill="none" stroke="#d97175" stroke-width="2"/>
            <use href="#titleblock" x="249" y="73" width="25" height="131"/><use href="#titleblock" x="449" y="73" width="25" height="131"/>
            <path d="M101 86H242V188H101ZM328 91H400V179H328Z" fill="none" stroke="#444" stroke-width="3"/>
            <path d="M124 112H142V130H124ZM172 114L186 128L210 118L224 134M176 158H220" fill="#565656" stroke="#565656" stroke-width="6"/><path d="M118 108H146V134H118ZM166 112Q172 136 196 130L226 108M196 130V140H226M166 150H226V172H166Z" fill="none" stroke="#1fd0d2" stroke-width="5"/>
            <path d="M116 106V138H148M168 140H228M160 160V176H228M226 104V130" fill="none" stroke="#27c427" stroke-width="5"/><path d="M138 106L148 112M206 112L226 128M210 150L196 156" stroke="#c07a2d" stroke-width="5"/><path d="M132 143H142M190 182H202M158 195H168M112 120H116" stroke="#ffe81c" stroke-width="6"/><path d="M168 194H184V199H168ZM176 102H184V107H176ZM148 118H154V132H148ZM204 110H214V114H204Z" fill="#fff"/>
            <path d="M344 106H386M340 112V178M388 112V178M336 120V170" stroke="#18e018" stroke-width="6"/><path d="M344 118H380V136H344Z" fill="#20cdd6"/><path d="M352 118H376V126H352ZM352 134H384V144H352ZM345 150H358V174H345Z" fill="#ef2020"/><path d="M346 144H406V164H364L346 158ZM386 112H406V120H386Z" fill="#a0734b"/><path d="M404 112V160" stroke="#a06c40" stroke-width="4"/><path d="M350 183H364V189H350ZM398 114H410V119H398ZM400 128H410V132H400ZM402 144H412V147H402ZM346 108H354V114H346Z" fill="#fff"/><path d="M364 184H378" stroke="#ffe81c" stroke-width="4"/>
          </svg>
          <svg class="badge"><use href="#dwg"/></svg>
        </div>
        <figcaption>09&nbsp; 序厅前台三视图.dwg</figcaption>
      </figure>

      <figure class="file">
        <div class="thumb">
          <svg class="cad h90" viewBox="775 19 639 270">
            <path d="M770 92H972V242H770M990 92H1208V242H990Z" fill="none" stroke="#8f4246" stroke-width="8"/><path d="M770 92H972V242H770M990 92H1208V242H990Z" fill="none" stroke="#d97175" stroke-width="2"/>
            <use href="#titleblock" x="945" y="91" width="27" height="153"/><use href="#titleblock" x="1179" y="91" width="28" height="153"/>
            <path d="M775 103H940V227H775M1047 130H1133V217H1047Z" fill="none" stroke="#444" stroke-width="3"/>
            <path d="M790 148H817V213H790ZM893 148H920V213H893ZM838 192H869V213H838Z" fill="#555" stroke="#20cdd6" stroke-width="4"/><path d="M793 168L814 152M793 186L814 168M793 204L814 186M896 168L917 152M896 186L917 168M896 204L917 186" stroke="#252525" stroke-width="3"/>
            <path d="M784 150V214M888 150V214M790 143H818M893 143H922M838 184H868" stroke="#18d018" stroke-width="4"/><path d="M816 140V170M920 140V170" stroke="#a96732" stroke-width="3"/><path d="M824 192H872" stroke="#f5b81c" stroke-width="7"/><path d="M796 219H812M898 219H914M848 218H862M842 230H866" stroke="#ffe81c" stroke-width="4"/><path d="M840 233H858V238H840ZM870 196H880V200H870Z" fill="#fff"/>
            <path d="M1066 144V205" stroke="#18d018" stroke-width="6"/><path d="M1074 144V205M1101 144V205" stroke="#6d86e4" stroke-width="4"/><path d="M1072 142H1104" stroke="#888" stroke-width="4"/><path d="M1088 138H1108L1134 118" fill="none" stroke="#b2602c" stroke-width="5"/><circle cx="1147" cy="115" r="14" fill="#333" stroke="#b2602c" stroke-width="5"/><path d="M1140 114H1156" stroke="#7f6df1" stroke-width="7"/><path d="M1048 208H1132" stroke="#c8c928" stroke-width="5"/><path d="M1104 146H1120V151H1104ZM1104 156H1120V160H1104ZM1164 112H1176V118H1164ZM1104 202H1112V208H1104ZM1074 231H1096V237H1074Z" fill="#fff"/><path d="M1080 230H1102" stroke="#dfbb16" stroke-width="4"/><path d="M1413 95V100M1413 240V246" stroke="#c06064" stroke-width="4"/>
          </svg>
          <svg class="badge"><use href="#dwg"/></svg>
        </div>
        <figcaption>10 智慧生活磨砂玻璃柱三视图.dwg</figcaption>
      </figure>

      <figure class="file">
        <div class="thumb">
          <svg class="cad h103" viewBox="63 19 639 309">
            <path d="M212 157H265V223H212M267 157H360V223H267ZM362 157H454V223H362ZM258 157V223M349 157V223M446 157V223M540 157H551V223H540ZM258 178H265M349 178H360M446 178H454M540 178H551M258 200H265M349 200H360M446 200H454M540 200H551" fill="none" stroke="#b75358" stroke-width="3"/>
            <path d="M172 157H211V223H172ZM278 164H346V218H278Z" fill="none" stroke="#4a4a4a" stroke-width="3"/><path d="M457 158H539V223H457Z" fill="none" stroke="#e9e01f" stroke-width="4"/>
            <path d="M255 158H264V166H255ZM255 205L264 202V220H257ZM351 160H358V165H351ZM351 206H360V220H353ZM447 160H453V165H447ZM447 206H454V220H449ZM541 160H550V165H541ZM541 204H550V220H543ZM212 158H254V161H212ZM218 170H224V178H218ZM232 194H246V200H232ZM306 216H318V221H306ZM398 216H408V221H398ZM382 165H388V170H382ZM420 165H428V170H420ZM502 214H514V219H502ZM266 190H276V194H266Z" fill="#fff"/>
            <path d="M180 164L192 188M198 164L176 182M176 176H206M178 200L204 216M200 196L176 212M176 206H208" stroke="#e1df27" stroke-width="5"/><path d="M188 162L204 184M184 196L200 220" stroke="#8ed01f" stroke-width="4"/><circle cx="188" cy="175" r="4" fill="#222"/><circle cx="190" cy="208" r="4" fill="#222"/><path d="M176 160H186V165H176Z" fill="#e53030"/><path d="M194 184H206V190H194ZM186 218H198V223H186Z" fill="#ddd"/>
            <path d="M222 172H246V194H222Z" fill="#c92622"/><path d="M216 176V194H250" fill="none" stroke="#eee04c" stroke-width="3"/><path d="M226 178L240 188M240 176L228 190" stroke="#680e12" stroke-width="3"/>
            <path d="M290 174H344V206H290ZM300 174V206M310 174V206M320 174V206M330 174V206M336 170V206M292 194H344M384 170V206H424V170M384 206H424M390 170H398V184H390ZM404 170H418V184H404Z" fill="#333" stroke="#22c928" stroke-width="3"/><path d="M392 188H416V200H392Z" fill="#555"/><path d="M318 180H340M282 198V214H302M284 206H326" stroke="#d8cf22" stroke-width="3" fill="none"/><path d="M384 203H392M416 203H424M336 206H342" stroke="#e02424" stroke-width="6"/>
            <path d="M468 168L488 182M496 170L526 198" stroke="#777" stroke-width="12"/><path d="M462 164L476 180L496 186M502 172L522 190L534 210M510 184H536V208H512Z" fill="none" stroke="#24bd2b" stroke-width="4"/><path d="M458 196H506V202H458ZM464 178H474V184H464Z" fill="#cf2424"/><path d="M470 204H506V218H470ZM484 178H492V190H484Z" fill="#f1e01f"/><path d="M512 206H532V214H512Z" fill="#1dc5d3"/><path d="M490 192H504V197H490Z" fill="#ddd"/>
          </svg>
          <svg class="badge"><use href="#dwg"/></svg>
        </div>
        <figcaption>11 旋转楼梯.dwg</figcaption>
      </figure>

      <figure class="file">
        <div class="thumb thumb-pdf">
          <div class="sheet"><div class="sheet-bar">PDF</div><p>计</p><p>算</p><p>书</p></div>
          <div class="badge badge-pdf">PDF</div>
        </div>
        <figcaption>12 旋转楼梯计算书.pdf</figcaption>
      </figure>
    </main>
  </div>

  <footer class="status">
    <span class="count">12 个项目</span>
    <button class="bare" aria-label="详细信息视图"><svg class="i-view"><use href="#detail"/></svg></button>
    <button class="bare" aria-label="缩略图视图"><svg class="i-view"><use href="#lg"/></svg></button>
  </footer>

  <svg class="watermark" aria-hidden="true">
    <defs>
      <mask id="ring" maskUnits="userSpaceOnUse" x="0" y="0" width="100%" height="100%">
        <g class="wm-text">
          <text transform="translate(24 383) rotate(-45)">知末网www.znzmo.com</text>
          <text transform="translate(574 383) rotate(-45)">知末网www.znzmo.com</text>
          <text transform="translate(1124 383) rotate(-45)">知末网www.znzmo.com</text>
          <text transform="translate(-126 748) rotate(-45)">知末网www.znzmo.com</text>
          <text transform="translate(424 748) rotate(-45)">知末网www.znzmo.com</text>
          <text transform="translate(974 748) rotate(-45)">知末网www.znzmo.com</text>
          <text transform="translate(1524 748) rotate(-45)">知末网www.znzmo.com</text>
        </g>
      </mask>
    </defs>
    <rect width="100%" height="100%" fill="#808080" fill-opacity=".15" mask="url(#ring)"/>
  </svg>
  <div class="stamp"><div class="stamp-logo">知末</div><div class="stamp-id">ID: 1130011025</div></div>
</div>
</body>
</html>
```
FILE: styles.css
```css
* { box-sizing: border-box; }

body {
  margin: 0;
  background: #fff;
  color: #111;
  font: 10px/14px "Noto Sans", "Noto Sans CJK SC", sans-serif;
}

button, input { font: inherit; color: inherit; }
button { margin: 0; padding: 0; border: 0; background: none; white-space: nowrap; }
a { color: inherit; text-decoration: none; }
svg { display: block; flex: none; }
figure, p, h1 { margin: 0; }

.sprite { position: absolute; width: 0; height: 0; }
.bare { display: flex; align-items: center; justify-content: center; }

.window {
  position: relative;
  display: flex;
  flex-direction: column;
  min-height: 100vh;
  overflow: hidden;
}

.i-folder { width: 12px; height: 14px; }
.caret {
  display: block;
  border: 3px solid transparent;
  border-top-color: currentColor;
  border-bottom: 0;
}

/* Title bar */
.titlebar { display: flex; align-items: center; height: 19px; padding: 0 16px 1px 1px; gap: 7px; }
.tick { width: 1px; height: 10px; background: #aaa; }
.customize { margin: 0 -2px; }
.i-cust { width: 8px; height: 8px; }
.caption { font-size: 10px; font-weight: 400; color: #8d8d8d; }
.winbtns { display: flex; gap: 28px; margin-left: auto; }
.winbtns svg { width: 10px; height: 10px; }

/* Tabs */
.tabs { display: flex; height: 22px; border-bottom: 1px solid #dfe1e4; }
.tab { width: 44px; height: 19px; color: #333; }
.tab-file { width: 47px; background: #0063b1; color: #fff; }
.tab-on { height: 22px; padding-bottom: 3px; border: 1px solid #dfe1e4; border-bottom: 0; background: #f4f6f8; }
.tabs-end { display: flex; align-items: center; gap: 8px; margin-left: auto; padding-right: 3px; }
.i-up { width: 8px; height: 6px; }
.help { width: 13px; height: 13px; border-radius: 50%; background: #0b62c4; color: #fff; font-weight: 700; line-height: 13px; }

/* Ribbon */
.ribbon {
  display: flex;
  height: 91px;
  padding: 2px 0 3px;
  background: #f4f6f8;
  border-bottom: 1px solid #d9dbde;
  color: #3a3a3a;
}
.group { display: flex; flex-direction: column; border-right: 1px solid #dfe1e4; }
.group-body { display: flex; flex: 1; }
.group-name { height: 14px; text-align: center; color: #555; }
.big { display: flex; flex-direction: column; align-items: center; height: 64px; padding-top: 5px; line-height: 14px; }
.big-icon { display: flex; align-items: center; height: 26px; margin-bottom: 2px; }
.i-wide { width: 24px; height: 19px; }
.i-square { width: 24px; height: 24px; }
.i-page { width: 19px; height: 24px; }
.i-pane { width: 14px; height: 11px; }
.i-cmd { width: 14px; height: 14px; }
.small { display: flex; align-items: center; gap: 2px; height: 21px; }
.small .caret { margin-left: 2px; }
button:disabled { color: #8b8b8b; }
.stack { display: flex; flex-direction: column; padding-top: 2px; }
.stack-two { gap: 6px; padding-top: 10px; }
.g-pane { width: 136px; }
.g-pane .group-body { gap: 4px; padding-left: 7px; }
.g-layout { width: 212px; padding-left: 5px; }
.g-layout .group-name { padding-right: 13px; }
.g-current { width: 195px; }
.g-current .group-body { gap: 5px; padding-left: 5px; }
.g-show { width: 128px; }
.g-show .group-body { gap: 6px; padding-left: 6px; }
.g-options { width: 44px; }
.g-options .group-body { justify-content: center; padding-right: 3px; }

.gallery { display: flex; width: 200px; height: 51px; margin-top: 4px; border: 1px solid #dde0e3; background: #f6f8fa; }
.views { display: grid; flex: 1; grid-template-columns: 62px 61px 63px; grid-template-rows: 16px 17px 17px; }
.view { display: flex; align-items: center; gap: 4px; padding-left: 1px; }
.view svg { width: 14px; height: 13px; }
.view-on { background: #cce4f7; outline: 1px solid #5fa9ea; }
.scroller { display: grid; grid-template-rows: 1fr 1fr 1fr; width: 12px; border-left: 1px solid #dde0e3; }
.scroller svg { width: 6px; height: 6px; }

.check { display: flex; align-items: center; gap: 6px; height: 21px; white-space: nowrap; }
.check input {
  appearance: none;
  display: grid;
  place-items: center;
  width: 11px;
  height: 11px;
  margin: 0;
  border: 1px solid #6f7f97;
  background: #fff;
}
.check input:checked::before {
  content: "";
  width: 7px;
  height: 4px;
  margin-bottom: 2px;
  border: solid #111;
  border-width: 0 0 2px 2px;
  transform: rotate(-45deg);
}

/* Address row */
.address { display: flex; align-items: center; height: 33px; padding: 1px 10px 0; }
.nav-b { justify-content: flex-start; width: 25px; }
.nav-b svg { width: 12px; height: 10px; }
.nav-s { justify-content: flex-start; width: 12px; margin-left: -4px; }
.nav-s svg { width: 7px; height: 7px; }
.nav-u { justify-content: flex-start; width: 20px; padding-left: 4px; }
.nav-u svg { width: 10px; height: 11px; }
.pathbox { display: flex; align-items: center; flex: 1; height: 26px; padding-left: 3px; border: 1px solid #d9d9d9; }
.crumbs { display: flex; align-items: center; flex: 1; gap: 9px; padding: 0 0 2px 7px; }
.chev { width: 4px; height: 4px; margin-left: -1px; border: solid #666; border-width: 1px 1px 0 0; transform: rotate(45deg); }
.path-drop { width: 24px; }
.path-drop svg { width: 9px; height: 6px; }
.path-refresh { width: 26px; height: 24px; border-left: 1px solid #d9d9d9; }
.path-refresh svg { width: 10px; height: 10px; }
.searchbox { display: flex; align-items: center; width: 93px; height: 26px; margin-left: 10px; padding-right: 7px; border: 1px solid #d9d9d9; }
.searchbox input { flex: 1; min-width: 0; border: 0; outline: 0; background: none; }
.searchbox svg { width: 10px; height: 10px; }

/* Body */
.main { display: flex; flex: 1; }
.tree { width: 133px; padding: 15px 2px 0 0; border-right: 1px solid #f1f1f1; }
.tree a { display: flex; align-items: center; height: 20px; padding-left: 27px; gap: 4px; overflow: hidden; white-space: nowrap; }
.tree a svg { width: 13px; height: 13px; }
.tree span { flex: 1; overflow: hidden; }
.tree .root { margin-top: 7px; padding-left: 20px; }
.tree .tight { margin-top: 6px; }
.tree .here { margin-top: 0; background: #d9d9d9; }
.tree a .i-pin { width: 9px; height: 9px; margin-right: 3px; }

.files {
  display: grid;
  flex: 1;
  grid-template-columns: repeat(auto-fill, 213px);
  grid-auto-rows: 233px;
  justify-content: space-between;
  align-content: start;
  column-gap: 24px;
  padding: 9px 23px 0 18px;
}
.file { display: flex; flex-direction: column; }
.thumb { position: relative; height: 213px; }
.thumb-pdf { width: 141px; margin: 0 auto; }
.cad { width: 213px; background: #000; }
.cad-slate { background: #212830; }
.h78 { height: 78px; }
.h84 { height: 84px; }
.h87 { height: 87px; }
.h88 { height: 88px; }
.h90 { height: 90px; }
.h103 { height: 103px; }
.badge { position: absolute; right: 0; bottom: 0; width: 40px; height: 40px; }
.dwg-name { font: 500 29px "Open Sans", sans-serif; fill: #3a3320; }
.dwg-tm { font: 700 13px "Open Sans", sans-serif; fill: #2b63a4; }
.badge-pdf {
  border-radius: 5px;
  background: conic-gradient(from 20deg at 50% 50%, #18e6c0, #19c3f5 90deg, #0f9df5 150deg, #7b8ff0 180deg, #f04a6a 200deg, #fb4a25 235deg, #fba51c 270deg, #fbe300 320deg, #d8ec30 350deg, #18e6c0);
  color: #fff;
  font: 600 18px/40px "Noto Sans", sans-serif;
  text-align: center;
  text-shadow: 0 1px 2px #0006;
}
.file figcaption { height: 20px; line-height: 14px; text-align: center; white-space: nowrap; }

.sheet { font: 700 10px/23px "Noto Sans CJK SC", sans-serif; text-align: center; }
.sheet-bar { height: 13px; margin-bottom: 66px; padding-right: 3px; background: #d40000; color: #fff; font: 700 11px/13px "Liberation Sans", sans-serif; }
.sheet p { padding-right: 8px; }

.status { display: flex; align-items: center; gap: 5px; height: 17px; padding: 0 5px 0 12px; color: #24466b; }
.count { flex: 1; }
.i-view { width: 14px; height: 12px; }

/* Overlays */
.watermark { position: absolute; inset: 0; width: 100%; height: 100%; pointer-events: none; z-index: 2; }
.wm-text {
  font: 700 34px "Liberation Sans", "Noto Sans CJK SC", sans-serif;
  fill: #000;
  stroke: #fff;
  stroke-width: 9px;
  stroke-linejoin: round;
  paint-order: stroke;
}
.stamp { position: absolute; right: 12px; bottom: 22px; z-index: 3; text-align: right; color: #fff; pointer-events: none; -webkit-text-stroke: 1px #999; }
.stamp-logo { padding-right: 57px; font: 500 62px/76px "Noto Sans CJK SC", sans-serif; }
.stamp-id { font: 500 31px/36px "Noto Sans", sans-serif; }
```
